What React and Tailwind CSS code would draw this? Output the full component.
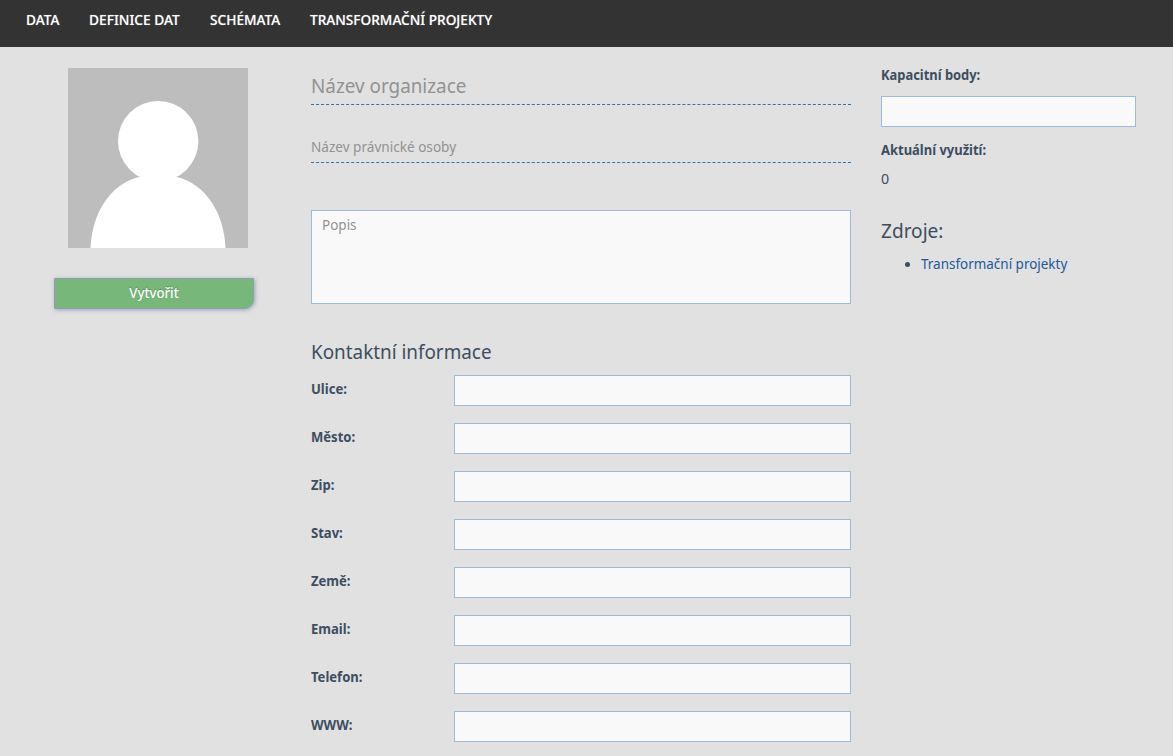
const fields = ['Ulice:', 'Město:', 'Zip:', 'Stav:', 'Země:', 'Email:', 'Telefon:', 'WWW:'];

function Text({ className = '', children }) {
  return <span className={`inline-block origin-left whitespace-nowrap ${className}`}>{children}</span>;
}

function NavItem({ className = '', textClass, children }) {
  return (
    <a href="#" className={`block shrink-0 ${className}`}>
      <Text className={textClass}>{children}</Text>
    </a>
  );
}

function Field({ label }) {
  return (
    <label className="flex h-12 items-start">
      <span className="w-[143px] shrink-0 pt-[3px] font-bold leading-5">
        <Text className="scale-x-[0.87]">{label}</Text>
      </span>
      <input className="h-[31px] min-w-0 flex-1 border border-[#9bbbdc] bg-[#f9f9f9] px-2.5 outline-none" />
    </label>
  );
}

function DashedLine() {
  return <div className="h-0 border-t border-dashed border-[#3272b0]" />;
}

export default function App() {
  return (
    <div className="h-[756px] w-[1173px] overflow-hidden bg-[#e1e1e1] font-['Noto_Sans',sans-serif] text-[15px] leading-5 text-[#3c4e60]">
      <nav className="flex h-[47px] bg-[#333333] pt-[9px] pl-[26px] font-medium text-white [text-shadow:0_0_1px_#ffffff80]">
        <NavItem className="w-[63px]" textClass="scale-x-[0.91]">DATA</NavItem>
        <NavItem className="w-[121px]" textClass="scale-x-[0.915]">DEFINICE DAT</NavItem>
        <NavItem className="w-[100px]" textClass="scale-x-[0.91]">SCHÉMATA</NavItem>
        <NavItem textClass="scale-x-[0.91]">TRANSFORMAČNÍ PROJEKTY</NavItem>
      </nav>

      <main className="flex pl-[54px]">
        <aside className="w-[257px] shrink-0 pt-[21px]">
          <svg className="ml-3.5 block size-[180px] bg-[#bdbdbd]" viewBox="0 0 180 180" fill="white">
            <circle cx="90.200" cy="73.2" r="40.2" />
            <path d="M22.500 180C24 144 43 116 71 109H109C137 116 156 144 157.500 180Z" />
          </svg>
          <button className="mt-[30px] block h-[31px] w-[200px] rounded-br-[10px] border border-[#929dad] bg-[#78b77a] pb-[3px] text-center font-medium text-white shadow-[1px_1px_4px_#8294b5cc] [text-shadow:0_-1px_1px_#4f8455aa]">
            <span className="inline-block scale-x-[0.88]">Vytvořit</span>
          </button>
        </aside>

        <section className="w-[540px] shrink-0">
          <div className="h-[57px] pt-[23px] text-[20.5px] leading-[30px] text-[#929292]">
            <Text className="scale-x-[0.92]">Název organizace</Text>
          </div>
          <DashedLine />
          <div className="h-[57px] pt-[31px] text-[#929292]">
            <Text className="scale-x-[0.905]">Název právnické osoby</Text>
          </div>
          <DashedLine />
          <div className="mt-[47px] h-[94px] border border-[#9bbbdc] bg-[#f9f9f9] px-2.5 pt-[3px] text-[#929292]">
            <Text className="scale-x-90">Popis</Text>
          </div>
          <h2 className="mt-8 text-[20.5px] leading-[30px]">
            <Text className="scale-x-[0.92]">Kontaktní informace</Text>
          </h2>
          <div className="mt-[9px]">
            {fields.map((label) => <Field key={label} label={label} />)}
          </div>
        </section>

        <aside className="ml-[30px] w-[255px] shrink-0 pt-[17px]">
          <label className="block">
            <span className="block h-8 font-bold">
              <Text className="scale-x-[0.86]">Kapacitní body:</Text>
            </span>
            <input className="block h-[31px] w-full border border-[#9bbbdc] bg-[#f9f9f9] px-2.5 outline-none" />
          </label>
          <div className="mt-3 font-bold">
            <Text className="scale-x-[0.865]">Aktuální využití:</Text>
          </div>
          <div className="mt-[9px]"><Text className="scale-x-95">0</Text></div>
          <h2 className="mt-[27px] text-[20.5px] leading-[30px]">
            <Text className="scale-x-[0.93]">Zdroje:</Text>
          </h2>
          <ul className="mt-2 flex items-center pl-6">
            <li className="flex items-center">
              <span className="mr-[11px] mt-0.5 size-[5px] rounded-full bg-[#3c4e60]" />
              <a href="#" className="text-[#22589b]"><Text className="scale-x-[0.897]">Transformační projekty</Text></a>
            </li>
          </ul>
        </aside>
      </main>
    </div>
  );
}
